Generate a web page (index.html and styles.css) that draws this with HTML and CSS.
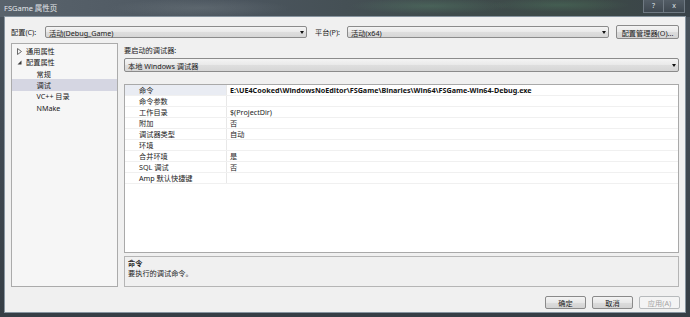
FILE: index.html
```html
<!DOCTYPE html>
<html lang="zh-CN">
<head>
<meta charset="utf-8">
<title>FSGame 属性页</title>
<link rel="stylesheet" href="styles.css">
</head>
<body>
<div class="window">
  <div class="titlebar">
    <span class="title">FSGame 属性页</span>
    <div class="caption-btns">
      <span class="cap-btn">?</span>
      <span class="cap-btn cap-close">x</span>
    </div>
  </div>
  <div class="client">
    <div class="toprow">
      <span class="lbl lbl-config">配置(C):</span>
      <div class="combo combo-config"><span class="combo-text">活动(Debug_Game)</span><i class="arrow"></i></div>
      <span class="lbl lbl-platform">平台(P):</span>
      <div class="combo combo-platform"><span class="combo-text">活动(x64)</span><i class="arrow"></i></div>
      <div class="btn btn-mgr">配置管理器(O)...</div>
    </div>
    <div class="main">
      <div class="tree">
        <div class="node">
          <svg class="twisty" width="5" height="7" viewBox="0 0 5 7"><path d="M0.5 0.5 L4.5 3.5 L0.5 6.5 Z" fill="none" stroke="#6a6a6a" stroke-width="1"/></svg>
          <span>通用属性</span>
        </div>
        <div class="node">
          <svg class="twisty" width="5" height="7" viewBox="0 0 5 7"><path d="M4.5 1.5 L4.5 5.5 L0.5 5.5 Z" fill="#3c3c3c"/></svg>
          <span>配置属性</span>
        </div>
        <div class="node child">常规</div>
        <div class="node child selected">调试</div>
        <div class="node child">VC++ 目录</div>
        <div class="node child">NMake</div>
      </div>
      <div class="right">
        <div class="lbl-debugger">要启动的调试器:</div>
        <div class="combo combo-debugger"><span class="combo-text">本地 Windows 调试器</span><i class="arrow"></i></div>
        <div class="grid">
          <div class="row current"><span class="name">命令</span><span class="value strong">E:\UE4Cooked\WindowsNoEditor\FSGame\Binaries\Win64\FSGame-Win64-Debug.exe</span></div>
          <div class="row"><span class="name">命令参数</span><span class="value"></span></div>
          <div class="row"><span class="name">工作目录</span><span class="value">$(ProjectDir)</span></div>
          <div class="row"><span class="name">附加</span><span class="value">否</span></div>
          <div class="row"><span class="name">调试器类型</span><span class="value">自动</span></div>
          <div class="row"><span class="name">环境</span><span class="value"></span></div>
          <div class="row"><span class="name">合并环境</span><span class="value">是</span></div>
          <div class="row"><span class="name">SQL 调试</span><span class="value">否</span></div>
          <div class="row last"><span class="name">Amp 默认快捷键</span><span class="value"></span></div>
        </div>
        <div class="desc">
          <div class="desc-title">命令</div>
          <div class="desc-text">要执行的调试命令。</div>
        </div>
      </div>
    </div>
    <div class="buttons">
      <div class="btn btn-ok">确定</div>
      <div class="btn btn-cancel">取消</div>
      <div class="btn btn-apply disabled">应用(A)</div>
    </div>
  </div>
</div>
</body>
</html>
```

FILE: styles.css
```css
* { box-sizing: border-box; }

body {
  margin: 0;
  width: 690px;
  height: 317px;
  overflow: hidden;
  font-family: "Noto Sans", "Noto Sans CJK SC", sans-serif;
  font-size: 7.2px;
  color: #1b1b1b;
  background: #3b444c;
}

.window {
  width: 690px;
  height: 317px;
  display: flex;
  flex-direction: column;
  background: linear-gradient(180deg, #4a545d 0%, #414a53 40%, #363e45 100%);
}

.titlebar {
  height: 17px;
  flex: none;
  display: flex;
  justify-content: space-between;
  align-items: flex-start;
  background:
    radial-gradient(ellipse 80px 8px at 430px 6px, rgba(90, 140, 110, 0.35), rgba(90, 140, 110, 0) 100%),
    radial-gradient(ellipse 70px 7px at 560px 5px, rgba(80, 130, 100, 0.35), rgba(80, 130, 100, 0) 100%),
    radial-gradient(ellipse 90px 9px at 200px 8px, rgba(120, 130, 135, 0.35), rgba(120, 130, 135, 0) 100%),
    linear-gradient(90deg, #59636c 0%, #4b555e 35%, #3f4b4c 65%, #3d4a47 85%, #3a434a 100%);
}

.title {
  margin: 3px 0 0 4px;
  font-size: 7.5px;
  line-height: 10px;
  color: #e4e8eb;
}

.caption-btns {
  display: flex;
  margin-right: 5px;
}

.cap-btn {
  width: 21px;
  height: 13px;
  border: 1px solid #6f7982;
  border-top: none;
  background: linear-gradient(180deg, #535d66, #3f4850);
  color: #dde2e6;
  font-size: 7px;
  line-height: 11px;
  text-align: center;
}

.cap-close { border-left: none; }

.client {
  flex: 1;
  margin: 0 5px 5px;
  background: #f0f0f0;
  padding: 8px 6px 3px;
  display: flex;
  flex-direction: column;
  box-shadow: 0 0 0 1px #8895a0;
}

/* top configuration row */
.toprow {
  height: 14px;
  flex: none;
  display: flex;
  align-items: center;
}

.lbl { white-space: nowrap; line-height: 11px; padding-top: 1px; }
.lbl-config { width: 34px; }
.lbl-platform { width: 32px; margin-left: 8px; }

.combo {
  display: flex;
  align-items: center;
  border: 1px solid #8b8b8b;
  border-radius: 2px;
  background: linear-gradient(180deg, #f4f4f4 0%, #e9e9e9 50%, #dedede 52%, #d6d6d6 100%);
  padding-left: 3px;
  white-space: nowrap;
}

.combo-text { flex: 1; line-height: 10px; padding-top: 1px; }

.arrow {
  width: 0;
  height: 0;
  border-left: 2.5px solid transparent;
  border-right: 2.5px solid transparent;
  border-top: 3px solid #111;
  margin-right: 2px;
}

.combo-config, .combo-platform { width: 262px; height: 12px; }

.btn {
  display: flex;
  align-items: center;
  justify-content: center;
  border: 1px solid #8a8a8a;
  border-radius: 2px;
  background: linear-gradient(180deg, #f3f3f3 0%, #e8e8e8 50%, #dcdcdc 52%, #d3d3d3 100%);
  white-space: nowrap;
  line-height: 10px;
  padding-top: 1px;
}

.btn-mgr { width: 63px; height: 14px; margin-left: 7px; }

/* main area */
.main {
  flex: none;
  height: 244px;
  margin-top: 4px;
  display: flex;
  gap: 6px;
}

.tree {
  width: 107px;
  border: 1px solid #ababab;
  background: #f6f6f6;
  padding-top: 1.5px;
}

.node {
  height: 11.3px;
  display: flex;
  align-items: center;
  padding-left: 5px;
  white-space: nowrap;
  line-height: 10px;
}

.twisty { margin-right: 4px; flex: none; }

.node.child { padding-left: 24.5px; }

.node.selected { background: #d5d6e2; }

.right {
  width: 555px;
  display: flex;
  flex-direction: column;
}

.lbl-debugger {
  height: 12px;
  line-height: 12px;
  padding-top: 0.5px;
  flex: none;
}

.combo-debugger {
  height: 14px;
  margin-top: 3px;
  flex: none;
}

.grid {
  flex: none;
  height: 169px;
  margin-top: 12px;
  border: 1px solid #a9a9a9;
  background: #ffffff;
}

.row {
  height: 11px;
  display: flex;
  border-bottom: 1px solid #f0f0f0;
  white-space: nowrap;
}

.row .name {
  width: 102px;
  padding-left: 14px;
  border-right: 1px solid #e8e8e8;
  line-height: 11px;
  flex: none;
}

.row.current .name { background: #e9ecf3; }

.row .value {
  padding-left: 3px;
  line-height: 11px;
}

.value.strong { font-weight: 700; color: #111; }

.desc {
  flex: none;
  height: 31px;
  margin-top: 3px;
  border: 1px solid #b5b5b5;
  background: #f0f0f0;
  padding-left: 3px;
  padding-top: 0.5px;
}

.desc-title { font-weight: 700; line-height: 10.5px; }
.desc-text { line-height: 10.5px; }

/* bottom buttons */
.buttons {
  flex: none;
  height: 13px;
  margin-top: 9px;
  margin-right: -1px;
  display: flex;
  justify-content: flex-end;
  gap: 6px;
}

.buttons .btn { width: 41px; height: 13px; }

.btn.disabled {
  color: #a3a3a3;
  border-color: #b7babc;
  background: #f4f4f4;
}
```
